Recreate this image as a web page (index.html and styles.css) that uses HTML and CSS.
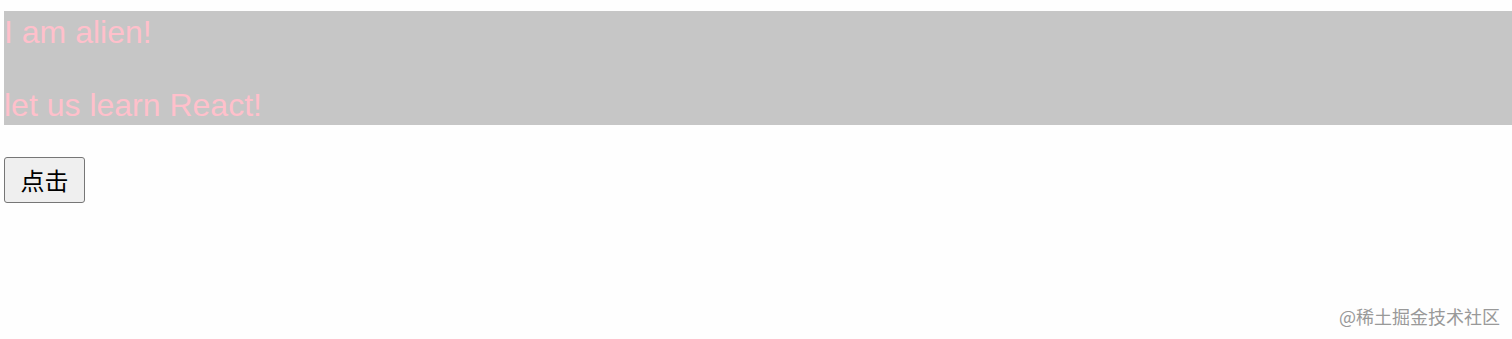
FILE: index.html
```html
<!DOCTYPE html>
<html lang="zh">
<head>
<meta charset="utf-8">
<title>Demo</title>
<link rel="stylesheet" href="styles.css">
</head>
<body>
<div class="page">
  <div class="box">
    <p class="line">I am alien!</p>
    <p class="line second">let us learn React!</p>
  </div>
  <button class="btn">点击</button>
</div>
<div class="watermark">@稀土掘金技术社区</div>
</body>
</html>
```
FILE: styles.css
```css
html, body {
  margin: 0;
  padding: 0;
  background: #fefefe;
}
body {
  width: 1512px;
  height: 339px;
  position: relative;
  overflow: hidden;
  font-family: "Liberation Sans", Arial, sans-serif;
}
.page {
  padding: 11px 0 0 4px;
}
.box {
  background: #c6c6c6;
  padding: 3px 0 1px 0;
  height: 110px;
  box-sizing: content-box;
}
.line {
  margin: 0;
  font-size: 32px;
  line-height: 36px;
  color: #ffc0cb;
  white-space: nowrap;
}
.second {
  margin-top: 37px;
}
.btn {
  margin-top: 32px;
  width: 81px;
  height: 46px;
  padding: 0;
  border: 1px solid #767676;
  border-radius: 3px;
  background: #efefef;
  color: #000;
  font-family: "Noto Sans CJK SC", sans-serif;
  font-size: 24px;
  line-height: 1;
  display: block;
}
.watermark {
  position: absolute;
  right: 12px;
  top: 305px;
  font-family: "Noto Sans CJK SC", sans-serif;
  font-size: 18px;
  line-height: 22px;
  color: #999;
}
```
